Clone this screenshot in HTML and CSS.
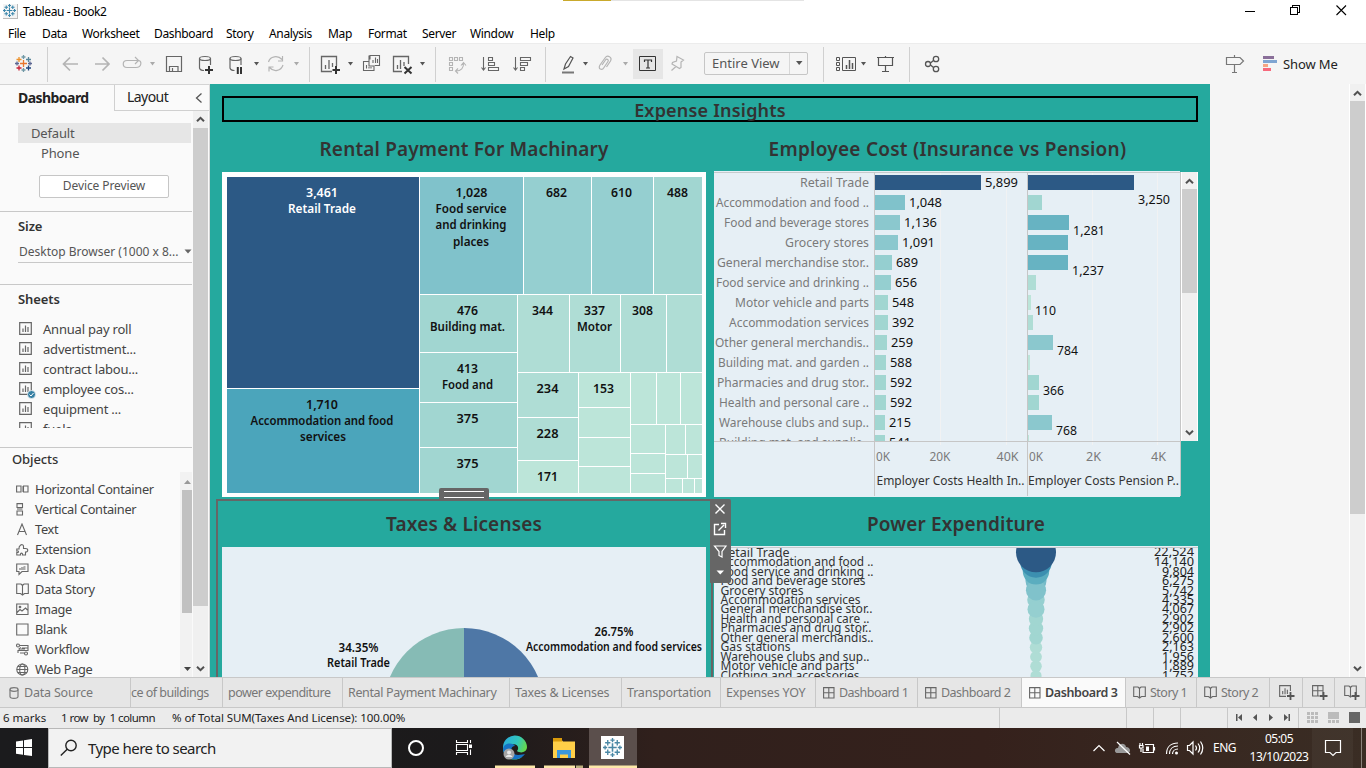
FILE: index.html
```html
<!DOCTYPE html>
<html lang="en">
<head>
<meta charset="utf-8">
<title>Tableau - Book2</title>
<link rel="stylesheet" href="styles.css">
</head>
<body>
<svg class="defs" width="0" height="0">
  <defs>
    <symbol id="chart" viewBox="0 0 14 14"><path d="M.7 .7H12.3V12.3H.7ZM4 6.500V10M6.500 3.500V10M9 5V10" fill="none" stroke="#666" stroke-width="1.200"/></symbol>
    <symbol id="grid" viewBox="0 0 12 12"><path d="M.6 .6H11V11H.6ZM5.800 .6V11M.6 5.800H11" fill="none" stroke="#666" stroke-width="1.100"/></symbol>
    <symbol id="book" viewBox="0 0 13 13"><path d="M6.500 2.500L5 1H.7V10.500H4.500L6.500 12L8.500 10.500H12.300V1H8L6.500 2.500ZM6.500 2.500V12" fill="none" stroke="#666" stroke-width="1.100"/></symbol>
    <symbol id="up" viewBox="0 0 9 7"><path d="M1 5.300L4.500 1.800L8 5.300" fill="none" stroke="#505050" stroke-width="2"/></symbol>
    <symbol id="down" viewBox="0 0 9 7"><path d="M1 1.700L4.500 5.200L8 1.700" fill="none" stroke="#505050" stroke-width="2"/></symbol>
    <symbol id="tab" viewBox="0 0 18 18">
      <path d="M9 5V13M5 9H13" stroke-width="1.500"/><path d="M9 0V4M7 2H11M9 14V18M7 16H11M0 9H4M2 7V11M14 9H18M16 7V11M4.500 2V7M2 4.500H7M13.500 2V7M11 4.500H16M4.500 11V16M2 13.500H7M13.500 11V16M11 13.500H16"/>
    </symbol>
  </defs>
</svg>

<header class="titlebar">
  <svg class="applogo" width="15" height="15"><use href="#tab" width="13" height="13" x="0" y="0" stroke="#3c87ac" stroke-width="1.500"/></svg>
  <span class="apptitle">Tableau - Book2</span>
  <div class="loadstrip"><i></i></div>
  <svg class="winctl" width="110" height="20"><path d="M0 10.500H10M45.500 6.500H52.500V13.500H45.500ZM47.500 6V4.500H54.500V11.500H53" fill="none" stroke="#000" shape-rendering="crispEdges"/><path d="M91.500 4.500L101 14M101 4.500L91.500 14" stroke="#000" stroke-width="1.100"/></svg>
</header>
<nav class="menu"><span>File</span><span>Data</span><span>Worksheet</span><span>Dashboard</span><span>Story</span><span>Analysis</span><span>Map</span><span>Format</span><span>Server</span><span>Window</span><span>Help</span></nav>

<div class="toolbar">
  <svg class="g" width="47" height="41" viewBox="0 43 47 41" fill="none" stroke-width="1.300">
    <path d="M23.500 60V67M20 63.500H27" stroke="#e8762d"/><path d="M19 57V62M16.500 59.500H21.500" stroke="#eb912c"/><path d="M28.500 57V62M26 59.500H31" stroke="#59879b"/><path d="M19 65.500V70.500M16.500 68H21.500" stroke="#c72035"/><path d="M28.500 65.500V70.500M26 68H31" stroke="#1f457e"/><path d="M23.500 55V59M21.500 57H25.500M23.500 68V72M21.500 70H25.500" stroke="#7199a6"/><path d="M15 63.500H19M17 61.500V65.500M28 63.500H32M30 61.500V65.500" stroke="#5c6692"/>
  </svg>
  <i class="sep"></i>
  <svg class="g" width="261" height="41" viewBox="48 43 261 41" fill="none" stroke="#666" stroke-width="1.200">
    <path d="M78 64H63.500M70 57.500L63.500 64L70 70.500M95 64H109M102.500 57.500L109 64L102.500 70.500" stroke="#b4b4b4" stroke-width="1.700"/>
    <path d="M131 60.500H127C122 60.500 122 67.500 127 67.500H136C142 67.500 142 60.500 138.500 60.500H130M135 57L138.500 60.500L135 64" stroke="#b4b4b4"/>
    <path d="M150 62H155L152.500 65.500Z" fill="#aaa" stroke="none"/>
    <path d="M166.500 56.500H181.500V71.500H166.500ZM169.500 71.500V66.500H178V71.500M172.500 68V71.500"/>
    <ellipse cx="205" cy="58.500" rx="5.500" ry="2"/><path d="M199.500 58.500V68C200 70 202 70.500 204 70.500M210.500 58.500V65"/><path d="M205 70H213M209 66V74" stroke="#333" stroke-width="2"/>
    <ellipse cx="235.500" cy="58.500" rx="5.500" ry="2"/><path d="M230 58.500V68C230.500 70 232 70.500 234.500 70.500M241 58.500V65"/><path d="M237.800 67V74M241 67V74" stroke="#333" stroke-width="2"/>
    <path d="M254 62H259L256.500 65.500Z" fill="#555" stroke="none"/>
    <path d="M268.500 62C270 56 278 55 282 59.500M283 65C281 71 274 72.500 269.500 67.500M282.500 56V61H278M269 71.500V67H273.500" stroke="#b4b4b4"/>
    <path d="M294 62H299L296.500 65.500Z" fill="#aaa" stroke="none"/>
  </svg>
  <i class="sep"></i>
  <svg class="g" width="125" height="41" viewBox="310 43 125 41" fill="none" stroke="#666" stroke-width="1.300">
    <path d="M332 71.500H321.500V56.500H336.500V66M325.500 65V69M329 60V69M332.500 63V67"/><path d="M332.500 70H340M336 66V74" stroke="#333" stroke-width="2"/>
    <path d="M348 62H353L350.500 65.500Z" fill="#555" stroke="none"/>
    <path d="M370 59.500V55.500H379.500V65.500H374.500M369 61.500H363.500V70.500H374V66M369 55.500V66H374M373 60V63M375.500 57.500V63M377.500 59V63M366.500 65V68.500M369 67V68.500M371 67V68.500" stroke-width="1.100"/>
    <path d="M402 71.500H393.500V56.500H408.500V64M397.500 65V69M400.500 60V69M404 62V66"/><path d="M404.500 67L411.500 73.500M411.500 67L404.500 73.500" stroke="#333" stroke-width="2"/>
    <path d="M420 62H425L422.500 65.500Z" fill="#555" stroke="none"/>
  </svg>
  <i class="sep"></i>
  <svg class="g" width="109" height="41" viewBox="436 43 109 41" fill="none" stroke="#666" stroke-width="1.100">
    <path d="M449.500 57.500H452.500V60.500H449.500ZM454.500 57.500H457.500V60.500H454.500ZM459.500 57.500H462.500V60.500H459.500ZM449.500 62.500H452.500V65.500H449.500ZM449.500 67.500H452.500V70.500H449.500ZM456 71C461 71 464 68 463.500 62.500M461 65.500L463.500 62.500L466 65.500M458 68.500L455.500 71L458 73.500" stroke="#b4b4b4"/>
    <path d="M483.500 57V69.500M481.500 67.500L483.500 70L485.500 67.500M488.500 57.500H492.500V60.500H488.500ZM488.500 62.500H494.500V65.500H488.500ZM488.500 67.500H498.500V70.500H488.500Z"/>
    <path d="M515.500 57V69.500M513.500 67.500L515.500 70L517.500 67.500M520.500 57.500H530.500V60.500H520.500ZM520.500 62.500H527.500V65.500H520.500ZM520.500 67.500H524.500V70.500H520.500Z"/>
  </svg>
  <i class="sep"></i>
  <svg class="g" width="87" height="41" viewBox="546 43 87 41" fill="none" stroke="#555" stroke-width="1.200">
    <path d="M564 69L565.500 64L570.500 56.500L573 58L568.500 66.500Z"/><path d="M562 72.500H574" stroke="#777" stroke-width="2"/><path d="M583 62H588L585.500 65.500Z" fill="#555" stroke="none"/>
    <path d="M602 65L605.500 60C607 58 609 60 608 61.500L604 67.500C602 71 597.500 69 600 65L605 58C607.500 54.500 612.500 57 610.500 61L606.500 67" stroke="#b4b4b4"/><path d="M623 62H628L625.500 65.500Z" fill="#aaa" stroke="none"/>
  </svg>
  <svg class="tbtn" width="30" height="30" viewBox="633 49 30 30" fill="none" stroke="#333"><path d="M639.500 56.500H655.500V70.500H639.500Z"/><path d="M644.500 62V60H651.500V62M648 60V68M646 68H650" stroke-width="1.200"/></svg>
  <svg class="g" width="41" height="41" viewBox="663 43 41 41" fill="none" stroke="#b4b4b4" stroke-width="1.200"><path d="M677 56.500L683.500 60L681 62L681 67.500L679.500 68.500L672 64L672.500 62.500L676.500 61ZM676 66.500L671.500 70.500"/></svg>
  <div class="combo"><span>Entire View</span><b><svg width="8" height="5"><path d="M1 0H7.500L4.200 4Z" fill="#555"/></svg></b></div>
  <i class="sep s2"></i>
  <svg class="g" width="85" height="41" viewBox="824 43 85 41" fill="none" stroke="#555" stroke-width="1.200">
    <path d="M836.500 57.500H839.500V60.500H836.500ZM836.500 62.500H839.500V65.500H836.500ZM836.500 67.500H839.500V70.500H836.500ZM842.500 57.500H855.500V70.500H842.500Z" stroke-width="1"/><path d="M846.500 65V69M849.500 60V69M852.500 63V69" stroke-width="1.500"/><path d="M861 62H866L863.500 65.500Z" fill="#555" stroke="none"/>
    <path d="M877 57.500H894M878.500 58V65.500H892.500V58M885.500 66V71.500M882 71.500H889M885.500 56V57"/>
  </svg>
  <i class="sep"></i>
  <svg class="g" width="50" height="41" viewBox="910 43 50 41" fill="none" stroke="#555" stroke-width="1.300"><circle cx="928" cy="64" r="2.500"/><circle cx="936" cy="59" r="2.700"/><circle cx="936" cy="69" r="2.700"/><path d="M930.500 63L933.500 60.500M930.500 65L933.500 67.500"/></svg>
  <svg class="g showme" width="60" height="41" viewBox="1222 43 60 41" fill="none" stroke="#777" stroke-width="1.200"><path d="M1226.500 57.500H1240L1243.500 61L1240 64.500H1226.500ZM1234.500 55V57M1234.500 65V72M1232 72.500H1237"/><g stroke="none"><path d="M1263 56H1274V59H1263Z" fill="#8a6f99"/><path d="M1263 60H1277V63H1263Z" fill="#7fa5d2"/><path d="M1263 64H1268V67H1263Z" fill="#f5a583"/><path d="M1263 68H1271V71H1263Z" fill="#f7697c"/></g></svg>
  <span class="showtxt">Show Me</span>
</div>

<main class="work">
  <aside class="side">
    <div class="sidetabs"><b>Dashboard</b><span>Layout</span><svg width="8" height="12"><path d="M6.500 1.500L1.500 6L6.500 10.500" fill="none" stroke="#555" stroke-width="1.300"/></svg></div>
    <div class="sidebody">
      <div class="sidecol">
        <section class="device"><p class="sel">Default</p><p class="phone">Phone</p><button>Device Preview</button></section>
        <section class="size"><h3>Size</h3><div class="drop"><span>Desktop Browser (1000 x 8...</span><svg width="8" height="5"><path d="M.5 .5H7.500L4 4.500Z" fill="#666"/></svg></div></section>
        <section class="sheets"><h3>Sheets</h3>
          <ul>
            <li><svg width="14" height="14"><use href="#chart"/></svg>Annual pay roll</li>
            <li><svg width="14" height="14"><use href="#chart"/></svg>advertistment...</li>
            <li><svg width="14" height="14"><use href="#chart"/></svg>contract labou...</li>
            <li><svg width="17" height="17"><use href="#chart" width="14" height="14"/><circle cx="12.500" cy="12.500" r="4" fill="#357fa3" stroke="#fafafa" stroke-width=".7"/><path d="M10.500 12.500L12 14L14.500 11" fill="none" stroke="#fff"/></svg>employee cos...</li>
            <li><svg width="14" height="14"><use href="#chart"/></svg>equipment ...</li>
            <li><svg width="14" height="14"><use href="#chart"/></svg>fuels</li>
          </ul>
        </section>
        <section class="objects"><h3>Objects</h3>
          <div class="objrow">
            <ul>
              <li><svg viewBox="0 0 13 13"><path d="M.6 3H5V9H.6ZM7.500 3H12V9H7.500Z"/><path d="M5.500 3H7V9H5.500Z" class="f"/></svg>Horizontal Container</li>
              <li><svg viewBox="0 0 13 13"><path d="M1 .6H6.500V4.500H1ZM1 8H6.500V12H1Z"/><path d="M1 5H6.500V7.500H1Z" class="f"/></svg>Vertical Container</li>
              <li><svg viewBox="0 0 13 13"><path d="M1.500 12L6 1L10.500 12M3 8.500H9"/></svg>Text</li>
              <li><svg viewBox="0 0 13 13"><path d="M.8 6H3C2.500 2.500 6.500 0 7.500 3V5.500H9.500C12.500 5.500 12.500 9 9.500 9V12H6.500C7 9.500 4 9.500 4.500 12H.8V9.500C3 10 3 7.500 .8 8Z"/></svg>Extension</li>
              <li><svg viewBox="0 0 13 13"><path d="M.7 1H12V8.500H6L3 11.500V8.500H.7Z"/><path d="M3 5H5V7H3ZM5 4H7.500V7H5ZM7.500 3H9.500V7H7.500Z" class="f"/></svg>Ask Data</li>
              <li><svg viewBox="0 0 13 13"><use href="#book"/></svg>Data Story</li>
              <li><svg viewBox="0 0 13 13"><path d="M.7 1H12V11.500H.7ZM1 9.500L4 6.500L6 8L9.500 5L11.500 7"/><circle cx="4" cy="4" r=".8"/></svg>Image</li>
              <li><svg viewBox="0 0 13 13"><path d="M.7 1H12V12H.7Z"/></svg>Blank</li>
              <li><svg viewBox="0 0 13 13"><circle cx="2" cy="2.500" r="1.500"/><circle cx="10" cy="10.500" r="1.500"/><path d="M4 2.500H12V5H6M12 5V7.500H2V10M5 4.500L3 6L5 7.500M4 10H8M5 6H9"/></svg>Workflow</li>
              <li><svg viewBox="0 0 13 13"><circle cx="6.300" cy="6.500" r="5.500"/><ellipse cx="6.300" cy="6.500" rx="2.600" ry="5.500"/><path d="M.8 6.500H12M1.800 3.500H11M1.800 9.500H11"/></svg>Web Page</li>
            </ul>
            <div class="miniscroll"><svg width="9" height="5"><path d="M1 5H8L4.500 1Z" fill="#999"/></svg><i></i><svg width="9" height="5"><path d="M1 0H8L4.500 4Z" fill="#444"/></svg></div>
          </div>
        </section>
      </div>
      <div class="scroll outer"><svg width="9" height="7"><use href="#up"/></svg><i></i><svg width="9" height="7"><use href="#down"/></svg></div>
    </div>
  </aside>

  <div class="dash">
    <h1 class="banner">Expense Insights</h1>
    <div class="panels">
      <section class="panel"><h2>Rental Payment For Machinary</h2><svg id="tree" class="tree" width="484" height="325" viewBox="222 172 484 325"></svg></section>
      <section class="panel"><h2 id="emp">Employee Cost (Insurance vs Pension)</h2>
        <div class="empbody"><svg id="bars" class="bars" width="467" height="326" viewBox="714 171 467 326"></svg>
        <div class="scroll inner"><svg width="9" height="7"><use href="#up"/></svg><i></i><svg width="9" height="7"><use href="#down"/></svg></div></div></section>
      <section class="panel low"><h2>Taxes &amp; Licenses</h2><svg id="pie" class="pie" width="484" height="130" viewBox="222 547 484 130"></svg></section>
      <section class="panel low"><h2 id="pow-title">Power Expenditure</h2><svg id="power" class="power" width="484" height="131" viewBox="714 546 484 131"></svg></section>
    </div>
    <div class="frame"><div class="grip"></div></div>
    <svg class="frametools" width="21" height="84" viewBox="710 499 21 84" fill="none" stroke="#fff" stroke-width="1.400"><path d="M710 499H729Q731 499 731 501V581Q731 583 729 583H710Z" fill="#666" stroke="none"/><path d="M715.500 504.500L724.500 513.500M724.500 504.500L715.500 513.500M719 524.500H714.500V534.500H724.500V530M718.500 530.500L724 525M721 523.500H725.500V528"/><path d="M714.500 546H726L722 551.500V557L719 555.500V551.500Z" stroke-width="1.200"/><path d="M716.500 570.500H724L720.300 574.500Z" fill="#fff" stroke="none"/></svg>
  </div>
  <div class="gutter"></div>
  <div class="scroll page"><svg width="9" height="7"><use href="#up"/></svg><i></i><svg width="9" height="7"><use href="#down"/></svg></div>
</main>

<nav class="tabs">
  <span class="ds"><svg width="10" height="12" fill="none" stroke="#777" stroke-width="1.200"><ellipse cx="5" cy="2.500" rx="4" ry="1.800"/><path d="M1 2.500V9.500C1 12 9 12 9 9.500V2.500"/></svg>Data Source</span>
  <span class="cut">ce of buildings</span><span>power expenditure</span><span class="mid">Rental Payment Machinary</span><span class="wide">Taxes &amp; Licenses</span><span class="wide">Transportation</span><span class="wide">Expenses YOY</span>
  <span><svg width="12" height="12"><use href="#grid"/></svg>Dashboard 1</span><span><svg width="12" height="12"><use href="#grid"/></svg>Dashboard 2</span><span class="on"><svg width="12" height="12"><use href="#grid"/></svg>Dashboard 3</span>
  <span><svg width="13" height="13"><use href="#book"/></svg>Story 1</span><span><svg width="13" height="13"><use href="#book"/></svg>Story 2</span>
  <span class="ic"><svg width="18" height="16"><use href="#chart" width="13" height="13"/><path d="M7 11H16M11.500 6V15" stroke="#e6e6e6" stroke-width="4"/><path d="M8 11H15.500M11.500 7V15" stroke="#555" stroke-width="1.800"/></svg></span>
  <span class="ic"><svg width="18" height="16"><use href="#grid" width="12" height="12"/><path d="M8 11H15.500M11.500 7V15" stroke="#555" stroke-width="1.800"/></svg></span>
  <span class="ic"><svg width="18" height="16"><use href="#book" width="13" height="13"/><path d="M8 11H15.500M11.500 7V15" stroke="#555" stroke-width="1.800"/></svg></span>
</nav>

<div class="status"><span>6 marks</span><span class="rc">1 row&nbsp; by&nbsp; 1 column</span><span class="pct">% of Total SUM(Taxes And License): 100.00%</span>
  <svg width="367" height="20" viewBox="999 708 367 20"><path d="M999.500 708V728M1126.500 708V728M1153.500 708V728M1180.500 708V728M1227.500 708V728M1298.500 708V728" stroke="#c8c8c8"/><path d="M1236 714H1237.500V721H1236ZM1242 714V721L1238 717.500ZM1257 714V721L1253 717.500ZM1269 714V721L1273 717.500ZM1284 714V721L1288 717.500ZM1288.500 714H1290V721H1288.500Z" fill="#555"/><path d="M1307 712H1310V715H1307ZM1311 712H1314V715H1311ZM1315 712H1318V715H1315ZM1307 716H1310V719H1307ZM1311 716H1314V719H1311ZM1315 716H1318V719H1315ZM1307 720H1310V723H1307ZM1311 720H1314V723H1311ZM1315 720H1318V723H1315ZM1328 712H1339V719H1328ZM1328 720H1331V723H1328ZM1332 720H1335V723H1332ZM1336 720H1339V723H1336Z" fill="#bbb"/><path d="M1349 712H1360V723H1349Z" fill="#666"/></svg>
</div>

<footer class="taskbar">
  <svg class="start" width="48" height="40"><path d="M16 13.500L23 12.500V19H16ZM24 12.300L32 11V19H24ZM16 20H23V26.700L16 25.700ZM24 20H32V28L24 26.900Z" fill="#fff"/></svg>
  <div class="search"><svg width="18" height="18" fill="none" stroke="#222" stroke-width="1.400"><circle cx="11" cy="6.500" r="5.200"/><path d="M7.200 10.200L.8 16.500"/></svg><span>Type here to search</span></div>
  <svg class="apps" width="246" height="40" viewBox="392 728 246 40">
    <defs><linearGradient id="eg" x1="0" y1="0" x2="1" y2=".4"><stop offset="0" stop-color="#2aa9e0"/><stop offset=".6" stop-color="#31c6bd"/><stop offset="1" stop-color="#66d94b"/></linearGradient></defs>
    <path d="M589 728H637V768H589Z" fill="#5b4f4c"/>
    <circle cx="416" cy="748" r="7" fill="none" stroke="#fff" stroke-width="2"/>
    <path d="M456.500 740V742.500H467.500V740M456.500 755V752.500H467.500V755M456.500 744.500H467.500V750.500H456.500ZM470.500 740V743M470.500 749.500V755" fill="none" stroke="#fff" stroke-width="1.100"/><path d="M469 744.500H472V748H469Z" fill="#fff"/>
    <path d="M503 748A12 12 0 0 1 527 747C527 752 521 754 517 751C521 746 514 742 510 746C505 752 512 760 522 757C514 763 503 758 503 748Z" fill="url(#eg)"/><path d="M503 749C504 743 512 742 515 746C509 746 511 755 518 755C521 755 524 754 525 754C519 763 504 760 503 749Z" fill="#1672c4"/>
    <circle cx="509" cy="754" r="5.500" fill="#a5a5a5"/><circle cx="509" cy="752.500" r="2" fill="#e8e8e8"/><path d="M505.500 757C507 754 511 754 512.500 757Z" fill="#e8e8e8"/>
    <path d="M553 739H561L563 741.500H575V758H553Z" fill="#ffcf48"/><path d="M553 738H562V741.500H553Z" fill="#d99a0b"/><path d="M557 750H571V758H568V754.500H560V758H557Z" fill="#3a97dd"/>
    <path d="M601 736H624V759H601Z" fill="#fff"/><use href="#tab" x="603" y="738" width="19" height="19" stroke="#4b88a5" stroke-width="1.300"/>
    <path d="M495 765.500H535V768H495ZM544 765.500H575V768H544ZM589 765.500H637V768H589Z" fill="#fde9a9"/><path d="M576 765.500H583V768H576Z" fill="#bdb07f"/>
  </svg>
  <svg class="tray" width="120" height="40" viewBox="1090 728 120 40" fill="none" stroke="#fff" stroke-width="1.200">
    <path d="M1093.500 751L1099 745.500L1104.500 751"/><path d="M1118 753C1113 753 1115 747 1118 748C1119 742 1126 743 1126 747C1131 747 1131 753 1128 753Z" fill="#999" stroke="none"/><path d="M1117 742L1130 754.500"/>
    <path d="M1145 744.500H1153.500V752.500H1143V749M1154.500 747V750.500M1140 743V745M1142.500 743V745M1139.500 745.500H1143V748H1139.500ZM1141 748V752"/><path d="M1146 746.500H1149V751H1146Z" fill="#fff" stroke="none"/>
    <path d="M1166.500 754C1166.500 747 1171 743 1178 743M1169.500 754C1169.500 749.500 1172.500 746 1178 746M1172.500 754C1172.500 751.500 1174.500 749 1178 749"/><circle cx="1176.500" cy="753" r="1.500" fill="#fff" stroke="none"/>
    <path d="M1187.500 745.500H1189.500L1193 742V754L1189.500 750.500H1187.500ZM1195.500 745.500Q1197.500 748 1195.500 750.500M1198 743.500Q1201.500 748 1198 752.500M1200.500 741.500Q1205 748 1200.500 754.500"/>
  </svg>
  <span class="lang">ENG</span><div class="clock"><span>05:05</span><span>13/10/2023</span></div>
  <svg class="note" width="56" height="40" viewBox="1310 728 56 40"><path d="M1312 728H1353V768H1312Z" fill="#fff" opacity=".04"/><path d="M1325.500 740.500H1340.500V752.500H1336L1333 755.500L1330 752.500H1325.500Z" fill="none" stroke="#fff" stroke-width="1.200"/><path d="M1361.500 728V768" stroke="#8a827b"/></svg>
</footer>
<script src="charts.js"></script>
</body>
</html>
```
FILE: charts.js
```js
const NS = 'http://www.w3.org/2000/svg';

function add(parent, name, attrs, text) {
  const el = document.createElementNS(NS, name);
  for (const k in attrs) if (attrs[k] !== undefined) el.setAttribute(k, attrs[k]);
  if (text !== undefined) el.textContent = text;
  parent.appendChild(el);
  return el;
}
function label(parent, x, y, text, width, anchor, cls) {
  add(parent, 'text', { x, y, class: cls, textLength: width, lengthAdjust: 'spacingAndGlyphs', 'text-anchor': anchor || 'start' }, text);
}
function rect(parent, x1, y1, x2, y2, fill) {
  add(parent, 'rect', { x: x1, y: y1, width: x2 - x1, height: y2 - y1, fill, 'shape-rendering': 'crispEdges' });
}

// Treemap cells: left, top, right, bottom, fill
const A = '#2c5985', B = '#4ba5bb', C = '#80c2cb', D = '#95cfd0', E = '#a1d6d1', F = '#afddd5', G = '#bce5d9';
const tree = document.getElementById('tree');
[[227,177,419,388,A],[227,389,419,493,B],[420,177,523,294,C],[524,177,591,294,D],[592,177,653,294,D],[654,177,702,294,E],
 [420,295,517,352,E],[420,353,517,402,E],[420,403,517,447,E],[420,448,517,493,E],
 [518,295,569,372,F],[570,295,620,372,F],[621,295,666,372,F],[667,295,702,372,F],
 [518,373,578,417,F],[518,418,578,460,F],[518,461,578,493,G],
 [579,373,630,407,G],[579,408,630,437,G],[579,438,630,466,G],[579,467,630,493,G],
 [631,373,656,424,G],[657,373,680,424,G],[681,373,702,424,G],
 [631,425,665,453,G],[631,454,665,473,G],[631,474,665,493,G],
 [666,425,685,454,G],[686,425,702,454,G],[666,455,687,478,G],[688,455,702,478,G],
 [666,479,682,493,G],[683,479,694,493,G],[695,479,702,493,G]].forEach(c => rect(tree, ...c));
[[322,197,'3,461',32,'w'],[322,213,'Retail Trade',68,'w'],[322,409,'1,710',32],[322,425,'Accommodation and food',143],[323,441,'services',46],
 [471.5,197,'1,028',32],[471,213,'Food service',71],[471,229,'and drinking',71],[471,246,'places',36],
 [556.5,197,'682',21],[621.5,197,'610',21],[677.5,197,'488',21],
 [467.5,315,'476',21],[467.5,331,'Building mat.',75],[467.5,373,'413',21],[467.5,389,'Food and',51],[467.5,423,'375',22],[467.5,468,'375',22],
 [542.5,315,'344',21],[594.5,315,'337',21],[594.5,331,'Motor',35],[642.5,315,'308',21],
 [547.5,393,'234',22],[547.5,438,'228',22],[547.5,481,'171',21],[603.5,393,'153',21]]
  .forEach(([x, y, t, w, k]) => label(tree, x, y, t, w, 'middle', k ? 'bold light' : 'bold'));

// Employee cost: category, label width, insurance bar, its label, pension bar, fill, pension fill
const bars = document.getElementById('bars');
rect(bars, 714, 171, 1180, 497, '#e6eff5');
[941, 1007, 1093, 1158].forEach(x => rect(bars, x - 1, 173, x, 445, '#f1f2f3'));
const clipRows = add(bars, 'clipPath', { id: 'rows' });
rect(clipRows, 714, 171, 1181, 441, '#000');
const rows = add(bars, 'g', { 'clip-path': 'url(#rows)' });
const P = '#67b3c2', Q = '#8bc8ce';
[['Retail Trade',69,106,'5,899',106,A,A],['Accommodation and food ..',153,30,'1,048',14,C,E],['Food and beverage stores',145,25,'1,136',41,Q,P],
 ['Grocery stores',84,23,'1,091',40,Q,P],['General merchandise stor..',152,17,'689',40,D,P],['Food service and drinking ..',153,16,'656',8,D,F],
 ['Motor vehicle and parts',134,13,'548',3,E,G],['Accommodation services',140,13,'392',5,E,F],['Other general merchandis..',154,12,'259',25,E,Q],
 ['Building mat. and garden ..',151,11,'588',2,E,G],['Pharmacies and drug stor..',152,11,'592',11,E,E],['Health and personal care ..',150,11,'592',11,E,E],
 ['Warehouse clubs and sup..',150,10,'215',24,E,Q],['Building mat. and supplie..',150,10,'541',1,E,G]]
  .forEach(([name, w, a, val, b, f1, f2], i) => {
    const y = 175 + 20 * i;
    rect(rows, 875, y, 875 + a, y + 15, f1);
    rect(rows, 1028, y, 1028 + b, y + 15, f2);
    label(rows, 869, y + 12, name, w, 'end', 'cat');
    label(rows, 879 + a, y + 12, val, val.length > 3 ? 33 : 22, 'start', 'val');
  });
[[1138,204,'3,250'],[1073,235,'1,281'],[1072,275,'1,237'],[1035,315,'110'],[1057,355,'784'],[1043,395,'366'],[1056,435,'768']]
  .forEach(([x, y, t]) => label(rows, x, y, t, t.length > 3 ? 32 : 21, 'start', 'val'));
rect(bars, 714, 172, 1181, 173, '#c6cacc');
rect(bars, 714, 441, 1181, 442, '#c6c6c6');
[874, 1027, 1180].forEach(x => rect(bars, x, 172, x + 1, 496, '#c6c6c6'));
[[876,'0K',14],[929.5,'20K',21],[996.5,'40K',22],[1029,'0K',14],[1086,'2K',15],[1151,'4K',15]].forEach(([x, t, w]) => label(bars, x, 461, t, w, 'start', 'cat'));
label(bars, 876.5, 485, 'Employer Costs Health In..', 148, 'start', 'axis');
label(bars, 1028, 485, 'Employer Costs Pension P..', 151, 'start', 'axis');

// Taxes pie
const pie = document.getElementById('pie');
rect(pie, 222, 547, 706, 677, '#e6eff5');
add(pie, 'path', { d: 'M464 708.500V628A80.500 80.500 0 0 1 544.500 708.500Z', fill: '#4e77a6' });
add(pie, 'path', { d: 'M464 708.500V628A80.500 80.500 0 0 0 383.500 708.500Z', fill: '#86bbb5' });
[[614,636,'26.75%',39],[614,651,'Accommodation and food services',176],[358.5,652,'34.35%',40],[358.5,667,'Retail Trade',63]]
  .forEach(([x, y, t, w]) => label(pie, x, y, t, w, 'middle', 'bold small'));

// Power expenditure: category, width, value, fill
const power = document.getElementById('power');
rect(power, 714, 546, 1198, 677, '#e6eff5');
rect(power, 714, 547, 1198, 548, '#c6cacc');
const clipPow = add(power, 'clipPath', { id: 'pow' });
rect(clipPow, 714, 548, 1198, 677, '#000');
const marks = add(power, 'g', { 'clip-path': 'url(#pow)' });
const spend = [['Retail Trade',69,22524,A],['Accommodation and food ..',153,14140,'#3c8fb0'],['Food service and drinking ..',153,9804,'#5badbf'],
 ['Food and beverage stores',145,6275,'#75bbc8'],['Grocery stores',83,5742,C],['Accommodation services',140,4335,D],['General merchandise stor..',152,4067,D],
 ['Health and personal care ..',149,2902,E],['Pharmacies and drug stor..',151,2902,E],['Other general merchandis..',153,2600,E],
 ['Gas stations',70,2163,F],['Warehouse clubs and sup..',149,1956,F],['Motor vehicle and parts',134,1889,F],['Clothing and accessories',139,1752,F]];
[13,12,11,10,9,8,7,5,3,6,4,2,1,0].forEach(i => add(marks, 'circle', { cx: 1036, cy: 552.3 + 9.5 * i, r: 20 * Math.sqrt(spend[i][2] / 22524), fill: spend[i][3] }));
spend.forEach(([name, w, v], i) => {
  const y = Math.floor(557.1 + 9.48 * i);
  label(marks, 720.5, y, name, w, 'start', 'axis');
  label(marks, 1194, y - (i ? 0 : 1), v.toLocaleString('en-US'), v > 9999 ? 40 : 32, 'end', 'axis thin');
});
```
FILE: styles.css
```css
* { box-sizing: border-box; margin: 0; padding: 0; }
body { width: 1366px; height: 768px; overflow: hidden; font: 13px/16px "Noto Sans", "Open Sans", sans-serif; color: #333; background: #fff; display: flex; flex-direction: column; }
svg { display: block; flex: none; }
.defs { position: absolute; }
ul { list-style: none; }
span { white-space: nowrap; }

.titlebar { height: 22px; display: flex; align-items: center; padding-left: 3px; color: #000; }
.applogo { border-right: 1px solid #bbb; border-bottom: 1px solid #bbb; background: #f4f4f4; fill: none; }
.apptitle { margin-left: 5px; padding-top: 1px; font-size: 12px; letter-spacing: -.4px; width: 200px; }
.loadstrip { margin-left: 340px; width: 241px; height: 1px; background: #e4e4e4; align-self: flex-start; }
.loadstrip i { display: block; width: 48px; height: 1px; background: #c9a92c; }
.winctl { margin-left: auto; margin-right: 11px; }
.menu { height: 21px; display: grid; grid-template-columns: 34px 40px 72px 72px 43px 59px 40px 54px 48px 60px 60px; padding: 4px 0 0 8px; color: #000; font-size: 12px; letter-spacing: -.35px; }

.toolbar { height: 41px; background: #f5f5f5; box-shadow: inset 0 1px #ececec; display: flex; align-items: center; }
.toolbar .g { height: 41px; }
.sep { width: 1px; height: 35px; background: #d0d0d0; margin-top: 2px; }
.tbtn { background: #e6e6e6; }
.combo { width: 104px; height: 23px; border: 1px solid #c6c6c6; border-radius: 2px; display: flex; color: #555; font-size: 13px; line-height: 21px; padding-left: 7px; }
.combo span { width: 77px; }
.combo b { flex: 1; border-left: 1px solid #d8d8d8; display: flex; align-items: center; justify-content: center; }
.s2 { margin-left: 15px; }
.showme { margin-left: 262px; }
.showtxt { margin-left: 1px; color: #222; letter-spacing: -.1px; }

.work { height: 593px; display: flex; overflow: hidden; }
.side { width: 210px; flex: none; background: #fafafa; border-top: 1px solid #d4d4d4; border-right: 1px solid #d8d8d8; display: flex; flex-direction: column; }
.sidetabs { height: 26px; display: flex; flex: none; align-items: center; font-size: 14px; color: #222; }
.sidetabs b { width: 114px; padding-left: 18px; letter-spacing: -.9px; }
.sidetabs b, .sidetabs span { letter-spacing: -.55px; }
.sidetabs span { flex: 1; height: 26px; border-left: 1px solid #d0d0d0; border-bottom: 1px solid #d0d0d0; padding: 4px 0 0 12px; }
.sidetabs svg { margin-left: -14px; margin-right: 6px; }
.sidebody { flex: 1; display: flex; min-height: 0; }
.sidecol { width: 192px; margin-right: 1px; overflow: hidden; }
.sidecol h3 { font-size: 13px; line-height: 16px; font-weight: 600; letter-spacing: -.1px; }
.device { height: 101px; border-bottom: 1px solid #c8c8c8; padding: 12px 1px 0 18px; color: #555; letter-spacing: -.15px; }
.sel { height: 20px; background: #e6e6e6; padding: 2px 0 0 13px; }
.phone { height: 32px; padding: 2px 0 0 23px; }
.device button { display: block; margin-left: 21px; width: 130px; height: 23px; background: #fff; border: 1px solid #c6c6c6; border-radius: 2px; color: #555; font: 12px/20px "Noto Sans", sans-serif; padding-bottom: 1px; letter-spacing: -.1px; }
.size { height: 73px; border-bottom: 1px solid #c8c8c8; padding: 6px 1px 0 18px; }
.drop { margin-top: 8px; height: 21px; border-bottom: 1px solid #c8c8c8; display: flex; align-items: center; justify-content: space-between; color: #555; font-size: 12px; padding: 0 0 1px 1px; margin-right: -1px; }
.sheets { height: 163px; border-bottom: 1px solid #c8c8c8; padding: 6px 0 0 18px; }
.sheets ul { margin-top: 12px; height: 109px; overflow: hidden; color: #444; letter-spacing: -.2px; }
.sheets li { height: 20px; padding-left: 1px; display: flex; align-items: center; position: relative; }
.sheets li svg { margin-right: 10px; }
.sheets li svg[width="17"] { margin-right: 7px; margin-top: 2px; }
.objects { padding: 3px 0 0 12px; }
.objects h3 { font-weight: 500; }
.objrow { display: flex; height: 210px; margin-top: 5px; }
.objects ul { width: 168px; padding-top: 7px; color: #444; letter-spacing: -.32px; font-size: 12.8px; }
.objects li { height: 20px; padding-left: 4px; display: flex; align-items: center; }
.objects li svg { width: 13px; height: 13px; margin-right: 6px; fill: none; stroke: #666; stroke-width: 1.1; }
.objects .f { fill: #aaa; stroke: none; }
.miniscroll { width: 12px; background: #f2f2f2; display: flex; flex-direction: column; align-items: flex-end; padding: 7px 0 7px; height: 207px; }
.miniscroll i { width: 10px; height: 123px; margin: 6px 0 auto; background: #c1c1c1; }

.scroll { width: 15px; background: #f0f0f0; display: flex; flex-direction: column; align-items: center; flex: none; }
.scroll i { width: 100%; background: #cdcdcd; margin-bottom: auto; }
.outer { padding: 5px 0; }
.outer i { height: 478px; margin-top: 5px; }
.page { width: 17px; border: solid #fff; border-width: 0 1px; padding: 6px 0 5px; }
.page i { height: 413px; margin-top: 4px; }
.inner { width: 17px; height: 269px; margin-top: 1px; padding: 6px 0 5px; border: solid #fff; border-width: 0 1px; }
.inner i { height: 104px; margin-top: 4px; }
.gutter { width: 139px; background: #f5f5f5; }

.dash { width: 1000px; flex: none; background: #25a99e; padding: 12px; position: relative; overflow: hidden; }
.banner { height: 26px; border: 2px solid #000; text-align: center; font-size: 18px; line-height: 25px; font-weight: 600; letter-spacing: .2px; }
.panels { display: grid; grid-template-columns: 484px 484px; column-gap: 8px; grid-template-rows: 375px 180px; }
.panel h2 { height: 50px; text-align: center; font-size: 19px; line-height: 54px; font-weight: 600; letter-spacing: .15px; }
#emp { height: 49px; width: 467px; letter-spacing: .25px; }
#pow-title { height: 49px; }
.tree { background: #fff; }
.empbody { display: flex; }
.bold { font-weight: 600; font-size: 12.5px; fill: #111; }
.light { fill: #fff; }
.small { font-size: 12px; }
.cat { font-size: 12.5px; fill: #7a7a7a; }
.val { font-size: 13px; fill: #111; }
.axis { font-size: 12.5px; fill: #333; }
.thin { fill: #222; }
.frame { position: absolute; left: 6px; top: 415px; width: 497px; height: 190px; border: 2px solid #666; }
.grip { position: absolute; left: 221px; top: -13px; width: 50px; height: 12px; background: #666; border-radius: 2px 2px 0 0; }
.grip::before { content: ""; display: block; margin: 3px 5px; height: 5px; border: solid #fff; border-width: 1px 0; }
.frametools { position: absolute; left: 500px; top: 415px; }

.tabs { height: 31px; background: #e6e6e6; border: solid #c8c8c8; border-width: 1px 0; display: grid; grid-template-columns: 131px 92px 120px 167px 112px 99px 95px 102px 104px 104px 71px 73px 33px 32px 31px; color: #777; letter-spacing: -.52px; }
.tabs span { border-right: 1px solid #c8c8c8; padding-left: 5px; display: flex; align-items: center; overflow: hidden; font-size: 12.5px; }
.tabs svg { margin-right: 4px; margin-left: 2px; }
.tabs .ds { padding-left: 7px; letter-spacing: -.2px; }
.tabs .ds svg { margin-right: 5px; }
.tabs .wide { letter-spacing: -.2px; }
.tabs .mid { letter-spacing: -.37px; }
.tabs .cut { padding-left: 0; }
.tabs .on { background: #fafafa; font-weight: 600; color: #444; letter-spacing: -.4px; }
.tabs .ic { padding-left: 7px; }
.tabs .ic svg { margin-right: -8px; }
.status { height: 20px; background: #ebebeb; color: #222; font-size: 11.5px; line-height: 20px; display: grid; grid-template-columns: 58px 111px 827px 367px; padding-left: 3px; }
.rc { letter-spacing: -.55px; }
.pct { letter-spacing: -.08px; }

.taskbar { height: 40px; display: flex; align-items: center; color: #fff; background: linear-gradient(90deg, #1b1b1d 0, #1c1a1b 35%, #30201c 48%, #35211c 72%, #3a2d24 100%); }
.search { width: 344px; height: 40px; background: #f2f2f2; border: 1px solid #b8b8b8; display: flex; align-items: center; padding-left: 11px; color: #222; font-size: 15px; }
.search span { margin-left: 10px; letter-spacing: -.55px; }
.tray { margin-left: 452px; }
.lang { margin-left: 3px; width: 36px; font-size: 12px; letter-spacing: -.5px; }
.clock { width: 60px; text-align: center; font-size: 12px; line-height: 18px; letter-spacing: -.5px; display: flex; flex-direction: column; }
.note { margin-left: auto; }
```
